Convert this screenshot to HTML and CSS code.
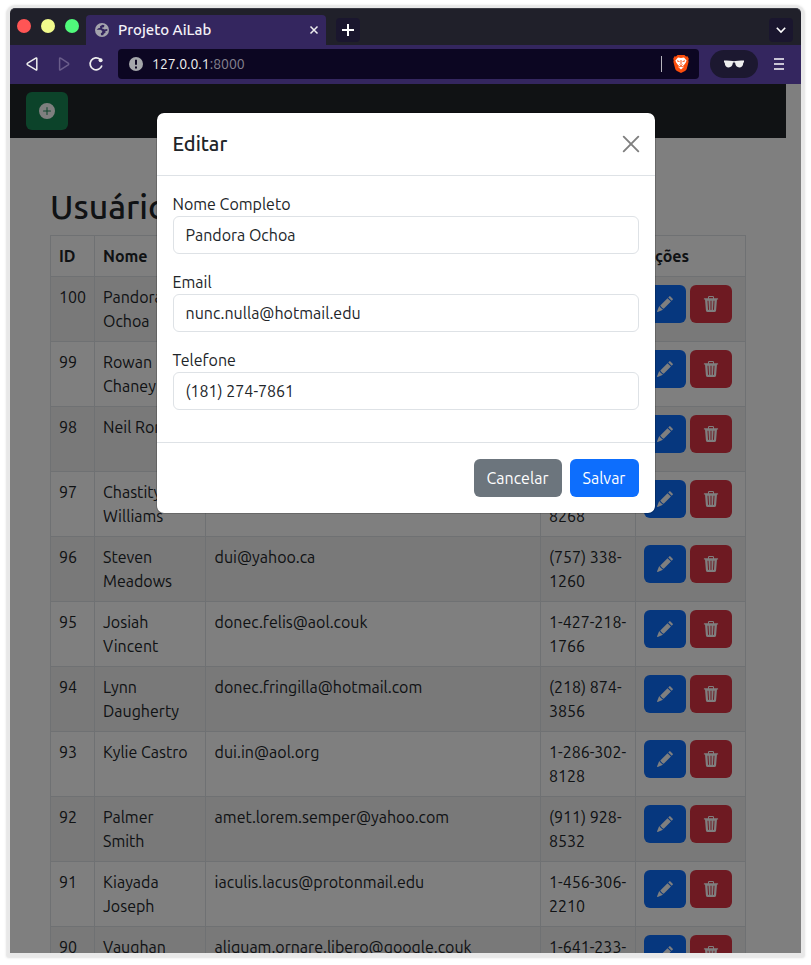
FILE: index.html
```html
<!DOCTYPE html>
<html lang="pt-BR">
<head>
<meta charset="utf-8">
<title>Projeto AiLab</title>
<link rel="stylesheet" href="styles.css">
</head>
<body>
<svg class="sprite" aria-hidden="true">
  <symbol id="pencil" viewBox="0 0 16 16"><path d="M12.400.3Q12.800 0 13.200.3L15.700 2.800Q16.100 3.300 15.700 3.700L14.700 4.800 11.300 1.400ZM10.500 2.200 13.900 5.600 6.700 12.800 5.300 12 4.700 11.200 3.900 10.600 3.300 9.400ZM2.600 10.200 3.300 11.400 4.100 12 4.700 12.800 5.900 13.500 5.400 14 .7 15.900Q0 16 .1 15.300L2 10.600Z"/></symbol>
  <symbol id="trash" viewBox="0 0 16 16"><path d="M11 1.300v.9h3.500a.7.7 0 0 1 0 1.400h-.538l-.853 10.560A2 2 0 0 1 11.115 16h-6.230a2 2 0 0 1-1.994-1.840L2.038 3.600H1.500a.7.7 0 0 1 0-1.400H5v-.9A1.300 1.300 0 0 1 6.300 0h3.400A1.300 1.300 0 0 1 11 1.300m-5 0v.9h4v-.9a.3.3 0 0 0-.3-.3H6.300a.3.3 0 0 0-.3.300M4.500 5.029l.5 8.500a.5.5 0 1 0 .998-.060l-.5-8.500a.5.5 0 1 0-.998.060m6.530-.528a.5.5 0 0 0-.528.470l-.5 8.500a.5.5 0 0 0 .998.058l.5-8.500a.5.5 0 0 0-.470-.528M8 4.500a.5.5 0 0 0-.5.500v8.500a.5.5 0 0 0 1 0V5a.5.5 0 0 0-.5-.5"/></symbol>
</svg>
<div class="window">
  <div class="tabstrip">
    <div class="lights"><i class="red"></i><i class="yellow"></i><i class="green"></i></div>
    <div class="tab">
      <svg class="globe" viewBox="0 0 14 14"><circle cx="7" cy="7" r="7"/><path d="M7.500 1.700 5 3.300 5.200 4.800 3.300 5.200 1.700 6.700 5.500 6.800 7.300 8 7 9.500 5.800 10.300 6 12.300 8.200 12.300 8.800 10.800 10.500 9.800 10.300 8.200 12.300 7.800 12.300 6 9.500 6.600 8 5.800 7 5.500 7.300 4.600 9 4.200 9.400 2.200Z"/></svg>
      <span class="tab-title">Projeto AiLab</span>
      <svg class="tab-close" viewBox="0 0 8 8"><path d="M.5.5l7 7M7.500.5l-7 7"/></svg>
    </div>
    <div class="square"><svg width="12" height="12" viewBox="0 0 12 12"><path d="M6 0v12M0 6h12" stroke="#fff" stroke-width="2"/></svg></div>
    <div class="square last"><svg width="10" height="6" viewBox="0 0 10 6"><path d="M.8.8 5 5 9.200.8" fill="none" stroke="#fff" stroke-width="1.600"/></svg></div>
  </div>
  <div class="toolbar">
    <svg class="nav-icons" width="88" height="20" viewBox="0 0 88 20" fill="none" stroke-width="1.500" stroke-linejoin="round">
      <path d="M10.800 4.500V15.500Q10.800 16.300 10 15.900L1.600 10.800Q.6 10 1.600 9.200L9.800 4.200Q10.800 3.600 10.800 4.500Z" stroke="#eee"/>
      <path d="M33.600 4.500V15.500Q33.600 16.300 34.400 15.900L42.200 10.800Q43.200 10 42.200 9.200L34.600 4.200Q33.600 3.600 33.600 4.500Z" stroke="#6a5d8b"/>
      <path d="M74.200 5.400A6 6 0 1 0 75.900 11.600" stroke="#eee" stroke-width="1.700"/><circle cx="74.600" cy="6.200" r="2" fill="#eee"/>
    </svg>
    <div class="address">
      <svg width="14" height="14" viewBox="0 0 14 14"><circle cx="7" cy="7" r="7" fill="#a5a7ab"/><path d="M7 2.800v5M7 9.500v2" stroke="#0c0622" stroke-width="2"/></svg>
      <span class="url">127.0.0.1<span class="port">:8000</span></span>
      <span class="divider"></span>
      <svg width="16" height="18" viewBox="0 0 16 18"><path d="M4.500 0h7l1.500 1.500 1.500-.2 1.300 2.500-.5 1.500.3 1.500-1.800 7Q13.500 15 12 16L8 18 4 16Q2.500 15 2.200 13.800L.4 6.800.7 5.300.2 3.800 1.500 1.300 3 1.500Z" fill="#fb4d0c"/><path d="M5 2.500 8 3l3-.5 2.600 3-.8 2-1.800 2.500-1 .7.600 1.500L8 14.500l-2.600-2.300.6-1.500-1-.7-1.800-2.500-.8-2Z" fill="#fff"/><path d="M4 5.800l2.500.8M12 5.800l-2.500.8M8 5v4M6.500 9.500 8 10.500l1.500-1M6 12l2-1 2 1" fill="none" stroke="#fb4d0c"/></svg>
    </div>
    <div class="private"><svg width="20" height="8" viewBox="0 0 20 8"><path d="M0 .5Q5 .2 8.500 1q1.500.3 3 0Q15 .2 20 .5v1.800l-.7.4Q19 7.500 15.300 7.500 11.800 7.500 11 2.600q-1-.4-2 0Q8.200 7.500 4.700 7.500 1 7.500 .7 2.700L0 2.300Z" fill="#eee"/></svg></div>
    <svg class="menu" width="10" height="12" viewBox="0 0 10 12"><path d="M0 1h10M0 6h10M0 11h10" stroke="#c9c5d5" stroke-width="2"/></svg>
  </div>
  <div class="viewport">
    <nav class="navbar"><button class="btn success"><svg viewBox="0 0 16 16"><path d="M16 8A8 8 0 1 1 0 8a8 8 0 0 1 16 0M8.500 4.500a.5.5 0 0 0-1 0v3h-3a.5.5 0 0 0 0 1h3v3a.5.5 0 0 0 1 0v-3h3a.5.5 0 0 0 0-1h-3z"/></svg></button></nav>
    <main class="content">
      <h1>Usuários</h1>
      <table>
        <colgroup><col class="c-id"><col class="c-name"><col class="c-mail"><col class="c-phone"><col class="c-act"></colgroup>
        <thead><tr><th>ID</th><th>Nome</th><th>Email</th><th>Telefone</th><th>Ações</th></tr></thead>
        <tbody id="rows"></tbody>
      </table>
    </main>
    <div class="backdrop"></div>
    <section class="modal" role="dialog">
      <header><h2>Editar</h2><svg width="16" height="16" viewBox="0 0 16 16"><path d="M.7.7l14.600 14.600M15.300.7.700 15.300" stroke="#7f7f7f" stroke-width="1.900" stroke-linecap="round"/></svg></header>
      <div class="modal-body">
        <label>Nome Completo</label><div class="field">Pandora Ochoa</div>
        <label>Email</label><div class="field">nunc.nulla@hotmail.edu</div>
        <label>Telefone</label><div class="field">(181) 274-7861</div>
      </div>
      <footer><button class="btn secondary">Cancelar</button><button class="btn primary">Salvar</button></footer>
    </section>
  </div>
</div>
<script src="rows.js"></script>
</body>
</html>
```
FILE: styles.css
```css
* { box-sizing: border-box; }
body { margin: 0; height: 965px; padding: 8px 10px; overflow: hidden; background: #fff; color: #212529; font: 16px/24px Ubuntu, "Noto Sans", sans-serif; }
svg { display: block; flex: none; overflow: visible; }
.sprite { display: none; }
h1, h2 { margin: 0; font-weight: 500; }
.window { width: 791px; height: 945px; border-radius: 5px 5px 1px 1px; box-shadow: 0 1px 1px 4px #e8e8e8, 0 1px 2px 5px #f7f7f7; }
.tabstrip { height: 37px; display: flex; align-items: flex-end; padding-right: 8px; background: #20202a; border-top: 1px solid #393a43; border-radius: 5px 5px 0 0; }
.lights { display: flex; gap: 10px; padding: 0 6px 12px 7.4px; width: 76px; }
.lights i { width: 14px; height: 14px; flex: none; border-radius: 50%; }
.red { background: #ff5555; }
.yellow { background: #f1fa8c; }
.green { background: #50fa7b; }
.tab { width: 240px; height: 30px; display: flex; align-items: center; padding: 0 8px 0 9px; background: #34265f; border-radius: 4px 4px 0 0; color: #f4f2f8; }
.globe { width: 14px; height: 14px; fill: #a4a3ad; }
.globe path { fill: #34265f; }
.tab-title { margin-left: 9px; font-size: 15px; font-weight: 500; }
.tab-close { width: 8px; height: 8px; margin-left: auto; stroke: #eee; stroke-width: 1.5; }
.square { width: 24px; height: 24px; display: flex; align-items: center; justify-content: center; margin: 0 0 3px 10px; border-radius: 4px; background: #1a162e; }
.square.last { margin-left: auto; margin-right: 0; }
.toolbar { height: 39px; display: flex; align-items: center; padding: 0 17px 1px 16px; background: #34265f; }
.nav-icons { margin-right: 4px; }
.address { width: 581px; height: 30px; display: flex; align-items: center; padding: 0 10px 0 11px; border-radius: 4px; background: #0c0622; color: #eee; font-size: 14px; }
.url { margin-left: 9px; }
.port { color: #85828f; }
.divider { width: 1px; height: 16px; margin: 0 11px 0 auto; background: #b6b4bd; }
.private { width: 48px; height: 28px; display: flex; align-items: center; justify-content: center; margin-left: 11px; border-radius: 14px; background: #1c1830; }
.menu { margin-left: auto; }
.viewport { position: relative; height: 869px; overflow: hidden; background: #fff; }
.navbar { width: 776px; height: 54px; padding: 8px 16px; background: #212529; }
.btn { width: 42px; height: 38px; display: inline-flex; align-items: center; justify-content: center; padding: 0; border: 0; border-radius: 6px; color: #fff; font: inherit; }
.btn svg { width: 16px; height: 16px; fill: currentColor; }
.success { background: #198754; }
.primary { background: #0d6efd; }
.danger { background: #dc3545; }
.secondary { background: #6c757d; }
.content { width: 776px; padding: 48px 40px 0; }
h1 { height: 49px; padding-bottom: 8px; font-size: 33.86px; line-height: 41px; }
table { width: 696px; table-layout: fixed; border-collapse: collapse; }
.c-id { width: 44px; }
.c-name { width: 111px; }
.c-mail { width: 335px; }
.c-phone { width: 95px; }
.c-act { width: 110px; }
th, td { padding: 8px; border: 1px solid #dee2e6; text-align: left; vertical-align: top; }
td:nth-child(3) { padding-left: 8.6px; }
tbody tr:nth-child(odd) { background: #f2f2f2; }
.actions { display: flex; gap: 4px; height: 48px; }
.backdrop { position: absolute; inset: 0; background: rgba(0, 0, 0, .5); }
.modal { position: absolute; top: 28px; left: 145.5px; width: 500px; background: #fff; background-clip: padding-box; border: 1px solid rgba(0, 0, 0, .175); border-radius: 8px; }
.modal header { height: 63px; display: flex; align-items: center; justify-content: space-between; padding: 0 16px; border-bottom: 1px solid #dee2e6; }
.modal h2 { font-size: 20px; line-height: 30px; }
.modal-body { padding: 16px; }
.modal label { display: block; }
.field { height: 38px; padding: 6px 12px; margin-bottom: 16px; border: 1px solid #dee2e6; border-radius: 6px; }
.modal footer { height: 71px; display: flex; justify-content: flex-end; gap: 8px; padding: 16px; border-top: 1px solid #dee2e6; }
footer .secondary { width: 88px; }
footer .primary { width: 69px; }
```
FILE: rows.js
```js
const users = [
  [100, "Pandora Ochoa", "nunc.nulla@hotmail.edu", "(181) 274-", "7861"],
  [99, "Rowan Chaney", "mauris@aol.org", "(403) 512-", "2290"],
  [98, "Neil Roman", "vitae@google.com", "1-330-421-", "1175"],
  [97, "Chastity Williams", "purus@yahoo.org", "1-752-164-", "8268"],
  [96, "Steven Meadows", "dui@yahoo.ca", "(757) 338-", "1260"],
  [95, "Josiah Vincent", "donec.felis@aol.couk", "1-427-218-", "1766"],
  [94, "Lynn Daugherty", "donec.fringilla@hotmail.com", "(218) 874-", "3856"],
  [93, "Kylie Castro", "dui.in@aol.org", "1-286-302-", "8128"],
  [92, "Palmer Smith", "amet.lorem.semper@yahoo.com", "(911) 928-", "8532"],
  [91, "Kiayada Joseph", "iaculis.lacus@protonmail.edu", "1-456-306-", "2210"],
  [90, "Vaughan", "aliquam.ornare.libero@google.couk", "1-641-233-", ""]
];
const icon = (name) => `<svg><use href="#${name}"/></svg>`;
document.getElementById("rows").innerHTML = users.map(([id, name, mail, a, b]) =>
  `<tr><td>${id}</td><td>${name}</td><td>${mail}</td><td>${a}<br>${b}</td><td><div class="actions"><button class="btn primary">${icon("pencil")}</button><button class="btn danger">${icon("trash")}</button></div></td></tr>`
).join("");
```
